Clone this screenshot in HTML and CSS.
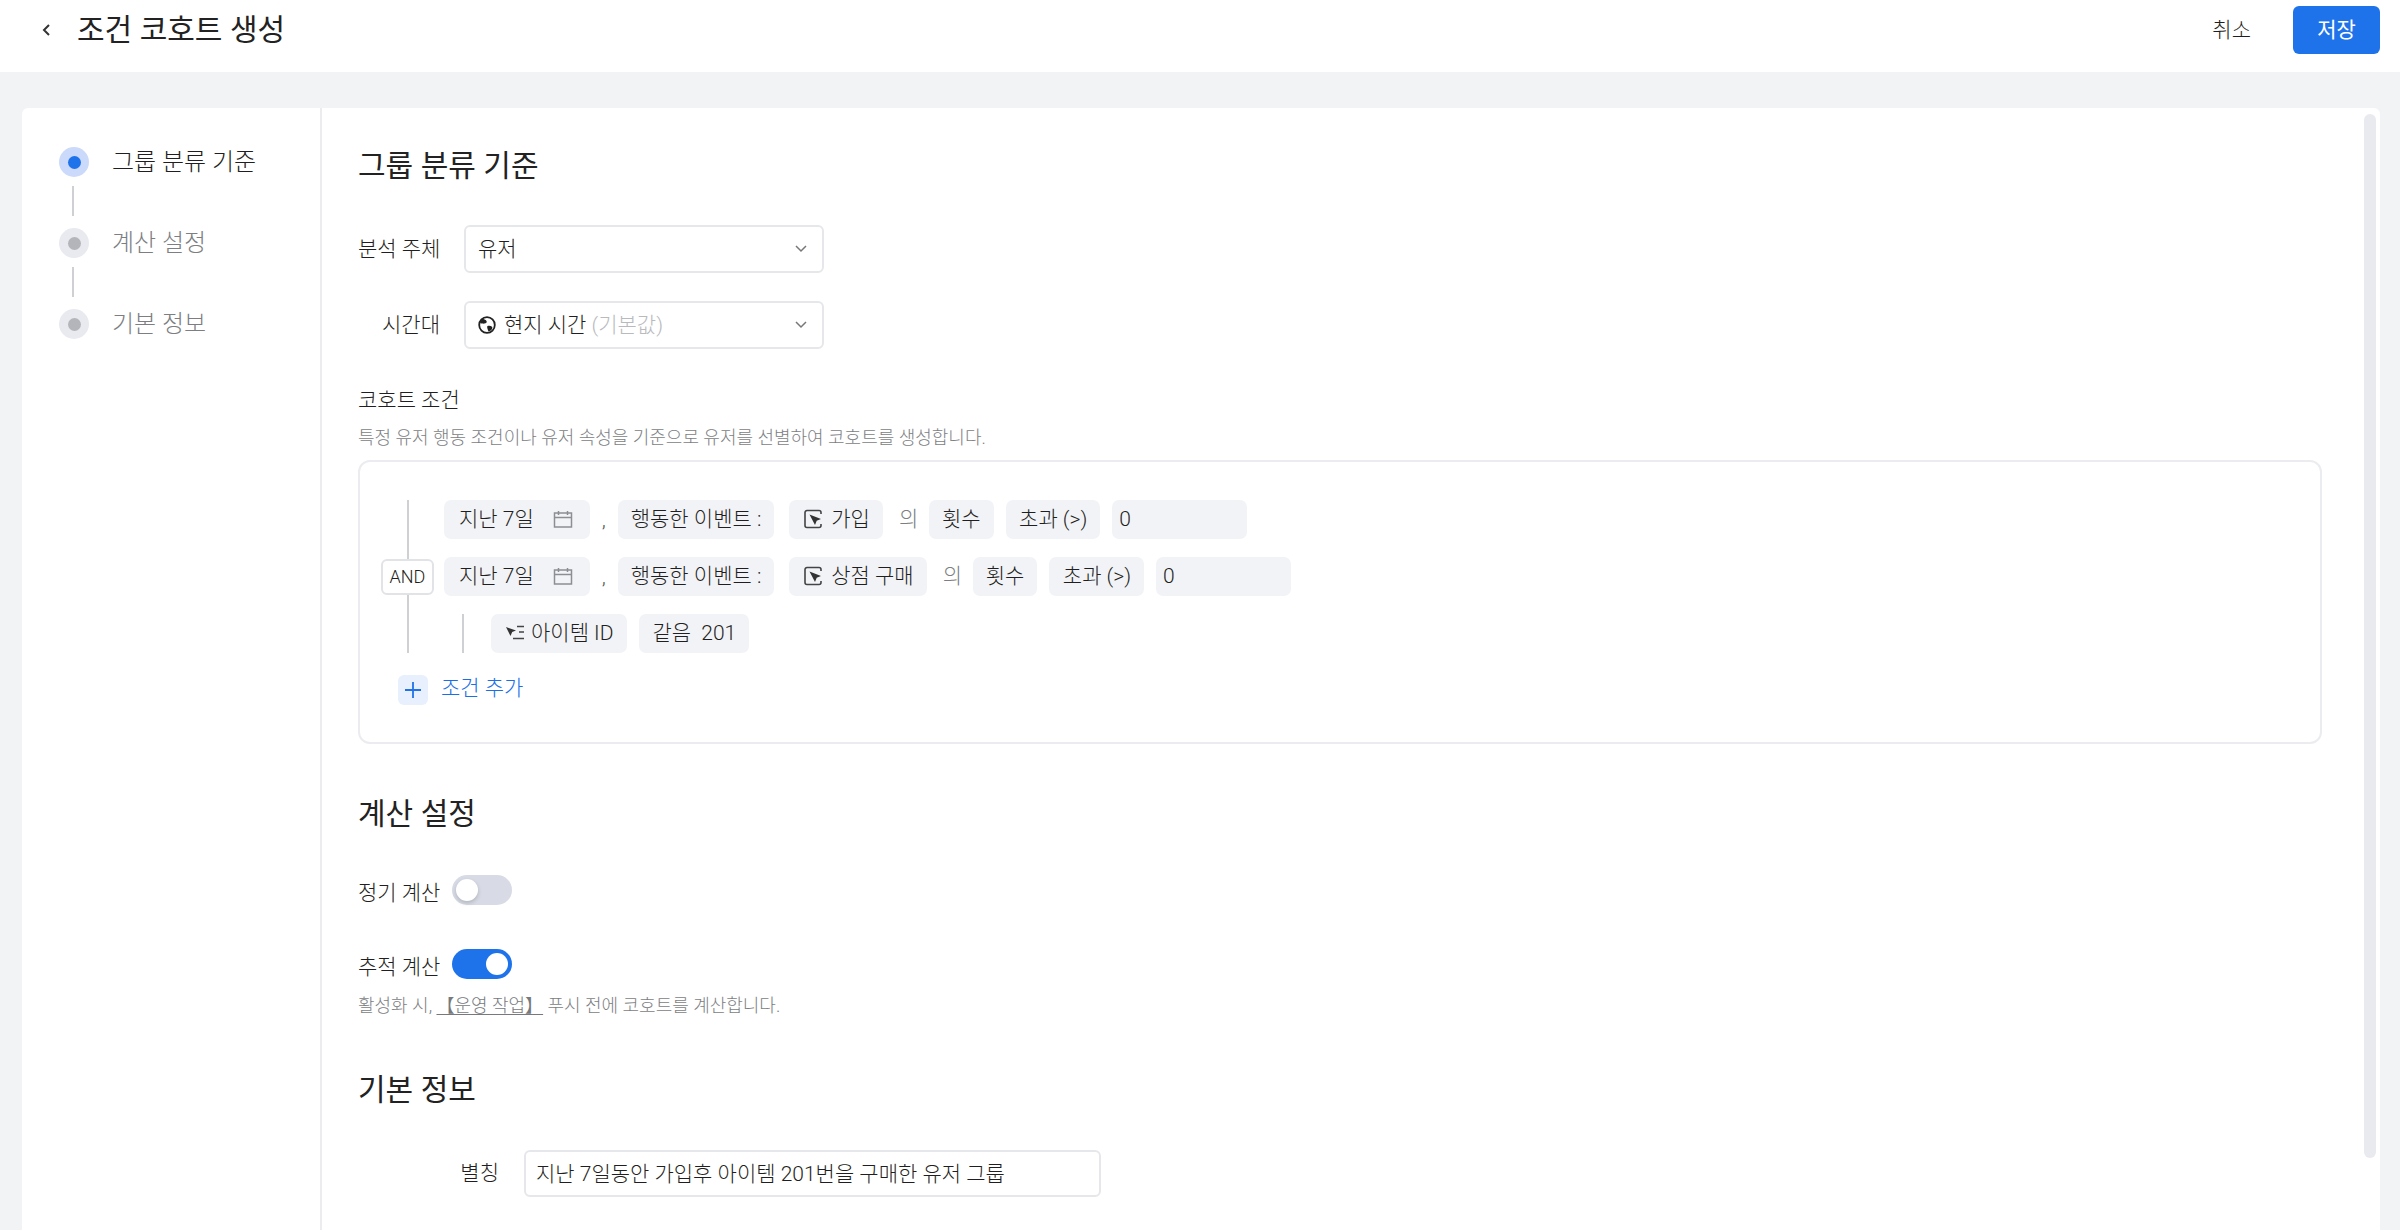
FILE: index.html
```html
<!DOCTYPE html>
<html lang="ko">
<head>
<meta charset="utf-8">
<title>조건 코호트 생성</title>
<link rel="stylesheet" href="styles.css">
</head>
<body>
<header class="topbar">
  <svg class="back" viewBox="0 0 12 18" width="12" height="18"><path d="M9 4 4 9l5 5" fill="none" stroke="#333" stroke-width="2"/></svg>
  <h1 class="title">조건 코호트 생성</h1>
  <span class="spacer"></span>
  <button class="cancel">취소</button>
  <button class="save">저장</button>
</header>
<main class="canvas">
  <div class="card">
    <nav class="steps">
      <div class="step active"><span class="dot"></span><span class="step-label">그룹 분류 기준</span></div>
      <div class="connector"></div>
      <div class="step"><span class="dot"></span><span class="step-label">계산 설정</span></div>
      <div class="connector"></div>
      <div class="step"><span class="dot"></span><span class="step-label">기본 정보</span></div>
    </nav>
    <div class="content">
      <h2 class="heading first">그룹 분류 기준</h2>
      <div class="form-row">
        <label class="field-label">분석 주체</label>
        <div class="select"><span>유저</span>
          <svg class="chev" viewBox="0 0 14 10" width="14" height="10"><path d="M2 2l5 5 5-5" fill="none" stroke="#777" stroke-width="1.500"/></svg>
        </div>
      </div>
      <div class="form-row tz">
        <label class="field-label">시간대</label>
        <div class="select">
          <span class="with-icon">
            <svg viewBox="0 0 18 18" width="18" height="18"><circle cx="9" cy="9" r="7.800" fill="none" stroke="#222" stroke-width="1.800"/><path d="M4 3c2 0 3.500.5 4.500 2 .8 1.300-.5 2.300-2 2.600C5 7.900 3 7.500 2 6.500zM9.500 10c1.500-.6 3.500-.3 4.500.7.800.8.200 2.300-.7 3.300-1 .9-2.300 1.500-3 1.200-.2-1.500-1.800-4.200-.8-5.200z" fill="#222"/></svg>
            <span>현지 시간 <span class="muted">(기본값)</span></span>
          </span>
          <svg class="chev" viewBox="0 0 14 10" width="14" height="10"><path d="M2 2l5 5 5-5" fill="none" stroke="#777" stroke-width="1.500"/></svg>
        </div>
      </div>
      <div class="sub-title">코호트 조건</div>
      <p class="caption cond-caption">특정 유저 행동 조건이나 유저 속성을 기준으로 유저를 선별하여 코호트를 생성합니다.</p>
      <section class="cond-box">
        <div class="group">
          <div class="logic"><span class="and">AND</span></div>
          <div class="rows">
            <div class="row">
              <span class="chip date">지난 7일
                <svg viewBox="0 0 20 18" width="20" height="18"><path d="M1.500 3h17v14h-17zM1.500 7.500h17M5.500 1v4M14.500 1v4" fill="none" stroke="#8c8e94" stroke-width="1.500"/></svg></span>
              <span class="comma">,</span>
              <span class="chip action">행동한 이벤트 :</span>
              <span class="chip evt">
                <svg viewBox="0 0 20 20" width="20" height="20"><path d="M18 5V3.500A2 2 0 0 0 16 1.500H4A2 2 0 0 0 2 3.500v13a2 2 0 0 0 2 2h12a2 2 0 0 0 2-2V15" fill="none" stroke="#444" stroke-width="1.600"/><path d="M6.500 5.500 18 10l-4.300 1.700L12 16z" fill="#333"/></svg>
                가입</span>
              <span class="of">의</span>
              <span class="chip">횟수</span>
              <span class="chip cmp">초과 (&gt;)</span>
              <span class="chip num">0</span>
            </div>
            <div class="row">
              <span class="chip date">지난 7일
                <svg viewBox="0 0 20 18" width="20" height="18"><path d="M1.500 3h17v14h-17zM1.500 7.500h17M5.500 1v4M14.500 1v4" fill="none" stroke="#8c8e94" stroke-width="1.500"/></svg></span>
              <span class="comma">,</span>
              <span class="chip action">행동한 이벤트 :</span>
              <span class="chip evt">
                <svg viewBox="0 0 20 20" width="20" height="20"><path d="M18 5V3.500A2 2 0 0 0 16 1.500H4A2 2 0 0 0 2 3.500v13a2 2 0 0 0 2 2h12a2 2 0 0 0 2-2V15" fill="none" stroke="#444" stroke-width="1.600"/><path d="M6.500 5.500 18 10l-4.300 1.700L12 16z" fill="#333"/></svg>
                상점 구매</span>
              <span class="of">의</span>
              <span class="chip">횟수</span>
              <span class="chip cmp">초과 (&gt;)</span>
              <span class="chip num">0</span>
            </div>
            <div class="row sub-row">
              <span class="sub-line"></span>
              <span class="chip prop">
                <svg viewBox="0 0 20 18" width="20" height="18"><path d="M1 3l10 3.500-3.800 1.500L5.500 12z" fill="#333"/><path d="M12 2.500h7M14 8h5M8 14.500h11" fill="none" stroke="#444" stroke-width="1.500"/></svg>
                아이템 ID</span>
              <span class="chip">같음&nbsp; 201</span>
            </div>
          </div>
        </div>
        <div class="add-row">
          <span class="add-icon"><svg viewBox="0 0 18 18" width="18" height="18"><path d="M9 1v16M1 9h16" stroke="#1f73ea" stroke-width="1.800"/></svg></span>
          <span class="add-text">조건 추가</span>
        </div>
      </section>
      <h2 class="heading second">계산 설정</h2>
      <div class="toggle-row">
        <label class="toggle-label">정기 계산</label>
        <span class="toggle"><span class="knob"></span></span>
      </div>
      <div class="toggle-row track">
        <label class="toggle-label">추적 계산</label>
        <span class="toggle on"><span class="knob"></span></span>
      </div>
      <p class="caption track-caption">활성화 시, <a class="link">【운영 작업】</a> 푸시 전에 코호트를 계산합니다.</p>
      <h2 class="heading third">기본 정보</h2>
      <div class="alias-row">
        <label class="alias-label">별칭</label>
        <div class="alias-input">지난 7일동안 가입후 아이템 201번을 구매한 유저 그룹</div>
      </div>
    </div>
    <div class="scroll-thumb"></div>
  </div>
</main>
</body>
</html>
```
FILE: styles.css
```css
* { box-sizing: border-box; }
html, body { margin: 0; height: 1230px; overflow: hidden; }
body {
  background: #f2f3f5;
  color: #1f1f21;
  font-family: Roboto, "Noto Sans CJK KR", sans-serif;
  font-size: 21px;
  font-weight: 300;
  line-height: 30px;
}
h1, h2, p { margin: 0; font-weight: 300; }
button { font: inherit; border: 0; cursor: pointer; }

.topbar {
  height: 72px;
  background: #fff;
  display: flex;
  align-items: center;
  padding: 0 20px 12px 40px;
}
.back { margin-right: 25px; }
.title { font-size: 30px; line-height: 44px; color: #222; font-weight: 400; }
.spacer { flex: 1; }
.cancel { background: none; color: #1f1f21; margin-right: 42px; padding: 0; }
.save { width: 87px; height: 48px; background: #1f73ea; color: #fff; border-radius: 6px; padding: 0; font-weight: 400; }

.canvas { padding: 36px 20px 0 22px; height: 1158px; }
.card {
  position: relative;
  background: #fff;
  border-radius: 6px 6px 0 0;
  height: 1122px;
  display: flex;
  overflow: hidden;
}

.steps { width: 300px; flex: none; border-right: 2px solid #ececee; padding: 39px 0 0 37px; }
.step { display: flex; align-items: center; height: 30px; }
.dot { width: 30px; height: 30px; border-radius: 50%; background: #e9eaf0; display: flex; align-items: center; justify-content: center; flex: none; }
.dot::after { content: ""; width: 13px; height: 13px; border-radius: 50%; background: #b4b5ba; }
.active .dot { background: #cbdafa; }
.active .dot::after { background: #1f73ea; }
.step-label { margin-left: 23px; font-size: 24px; color: #7c7e82; }
.active .step-label { color: #1f1f21; }
.connector { width: 2px; height: 30px; margin: 9px 0 12px 13px; background: #cfd0d4; }

.content { flex: 1; padding: 36px 0 0 36px; }
.heading { font-size: 30px; line-height: 44px; color: #222; font-weight: 400; }
.heading.first { margin-bottom: 37px; }
.heading.second { margin-top: 48px; margin-bottom: 39px; }
.heading.third { margin-top: 49px; margin-bottom: 38px; }

.form-row { display: flex; align-items: center; height: 48px; }
.form-row.tz { margin-top: 28px; }
.field-label { width: 82px; text-align: right; margin-right: 24px; white-space: nowrap; }
.select {
  width: 360px; height: 48px;
  border: 2px solid #e6e7ea; border-radius: 6px;
  padding: 0 14px 0 12px;
  display: flex; align-items: center; justify-content: space-between;
}
.with-icon { display: inline-flex; align-items: center; gap: 8px; }
.muted { color: #b9babe; }

.sub-title { margin-top: 36px; line-height: 30px; }
.caption { font-size: 18px; line-height: 26px; color: #7c7e82; }
.cond-caption { margin-top: 10px; }

.cond-box {
  margin-top: 9px;
  width: 1964px; height: 284px;
  border: 2px solid #ebecef; border-radius: 12px;
  padding: 38px 0 0 21px;
}
.group { display: flex; gap: 10px; position: relative; }
.group::before { content: ""; position: absolute; left: 26px; top: 0; bottom: 0; width: 2px; background: #cfd0d3; }
.logic { width: 53px; display: flex; align-items: center; flex: none; position: relative; }
.and {
  width: 53px; height: 36px; background: #fff;
  border: 2px solid #e2e3e6; border-radius: 6px;
  display: flex; align-items: center; justify-content: center;
  font-size: 18px;
}
.rows { display: flex; flex-direction: column; gap: 18px; }
.row { display: flex; align-items: center; gap: 12px; height: 39px; }
.chip {
  height: 39px; padding: 0 13px 2px;
  background: #f2f3f7; border-radius: 7px;
  display: inline-flex; align-items: center; white-space: nowrap;
}
.date { padding-left: 15px; padding-right: 17px; gap: 19px; }
.comma { color: #555; width: 3px; margin-right: 1px; }
.action { margin-right: 3px; }
.evt { gap: 8px; padding-left: 14px; padding-right: 13px; }
.of { color: #7c7e82; margin: 0 0 2px 4px; width: 18px; white-space: nowrap; }
.cmp { padding-left: 13.5px; padding-right: 13px; }
.num { width: 135px; padding-left: 7px; padding-right: 7px; }
.sub-row { gap: 0; margin-left: 18px; }
.sub-line { width: 2px; height: 39px; background: #cfd0d3; margin-right: 27px; }
.sub-row .chip + .chip { margin-left: 12px; }
.prop { gap: 6px; padding-left: 14px; padding-right: 14px; }

.add-row { display: flex; align-items: center; gap: 13px; margin: 20px 0 0 17px; }
.add-icon { width: 30px; height: 30px; background: #e8f0fd; border-radius: 6px; display: flex; align-items: center; justify-content: center; }
.add-text { color: #1a6ee8; padding-bottom: 4px; }

.toggle-row { display: flex; align-items: center; height: 30px; }
.toggle-row.track { margin-top: 44px; }
.toggle-label { width: 82px; margin-right: 12px; position: relative; top: 3px; white-space: nowrap; }
.toggle { width: 60px; height: 30px; border-radius: 15px; background: #d8dbe5; display: block; position: relative; }
.knob { position: absolute; left: 4px; top: 4px; width: 22px; height: 22px; border-radius: 50%; background: #fff; box-shadow: 0 2px 4px rgba(0,0,0,.18); }
.toggle.on { background: #1f73ea; }
.on .knob { left: 34px; box-shadow: none; }
.track-caption { margin-top: 14px; }
.link { text-decoration: underline; text-underline-offset: 2px; color: #77797d; }

.alias-row { display: flex; align-items: center; height: 47px; }
.alias-label { width: 141px; text-align: right; margin-right: 25px; position: relative; top: -1px; }
.alias-input {
  width: 577px; height: 47px;
  border: 2px solid #e6e7ea; border-radius: 6px;
  padding: 0 10px; display: flex; align-items: center;
}

.scroll-thumb { position: absolute; left: 2342px; top: 6px; width: 12px; height: 1044px; border-radius: 6px; background: #e9eaef; }
```
